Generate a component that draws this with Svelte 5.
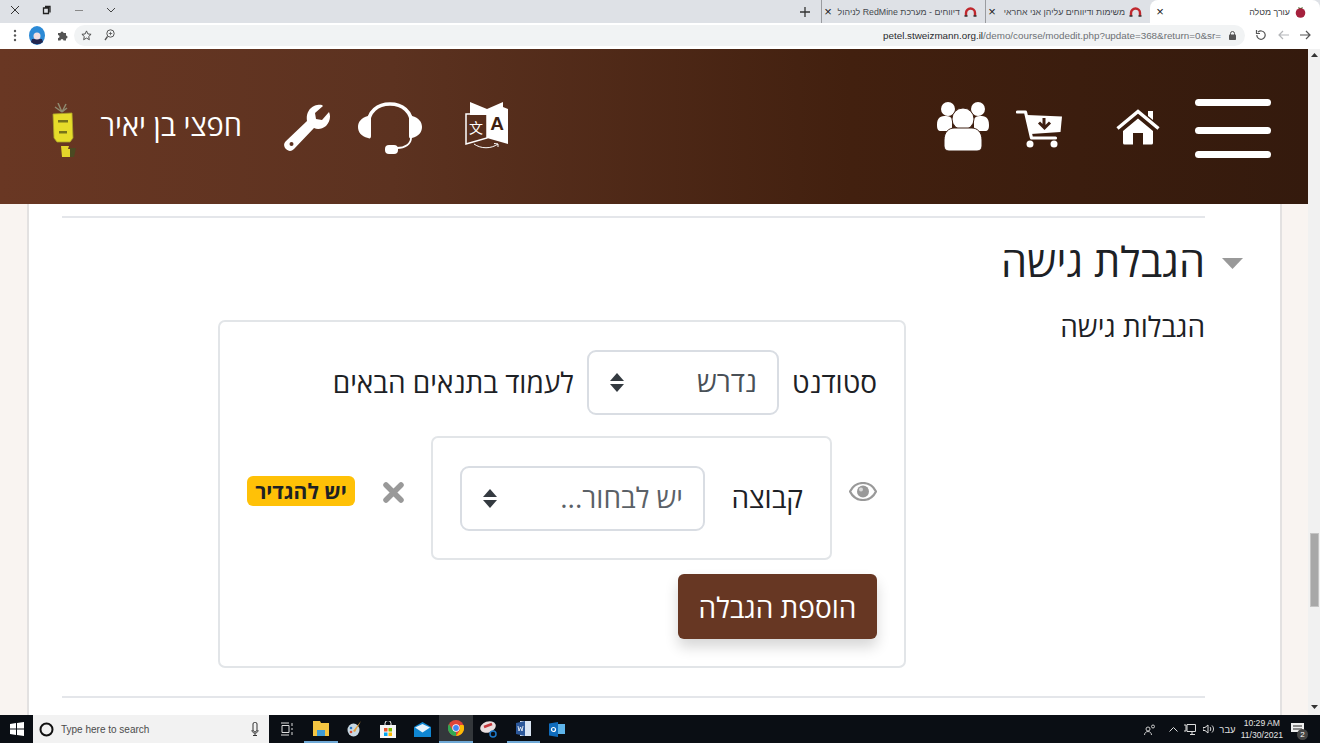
<script lang="ts">
  const tabs = [
    { title: 'משימות ודיווחים עליהן אני אחראי', width: 165 },
    { title: 'דיווחים - מערכת RedMine לניהול', width: 164 },
  ];
</script>

<div class="app">
  <div class="tabstrip">
    <div class="wincontrols">
      <svg width="10" height="10" viewBox="0 0 10 10"><path d="M1 1l8 8M9 1l-8 8" stroke="#333" fill="none" /></svg>
      <svg width="10" height="10" viewBox="0 0 10 10"><path d="M3 1.500h5v6M1.500 3h5v5.500h-5z" stroke="#222" stroke-width="1.300" fill="none" /></svg>
      <svg width="10" height="10" viewBox="0 0 10 10"><path d="M1 5.500h8" stroke="#888" /></svg>
      <svg width="10" height="10" viewBox="0 0 10 10"><path d="M1 3l4 4 4-4" stroke="#444" fill="none" /></svg>
    </div>
    <div class="tabs">
      <div class="tab active">
        <svg width="11" height="13" viewBox="0 0 11 13"><path d="M3 2l2.500 1L8 2 7 4H4z" fill="#4a7a35" /><circle cx="5.500" cy="8" r="4.800" fill="#a5213d" /></svg>
        <span class="tabtitle">עורך מטלה</span>
        <span class="tabx">×</span>
      </div>
      {#each tabs as tab}
        <div class="tab" style="width:{tab.width}px">
          <svg width="13" height="10" viewBox="0 0 13 10"><path d="M2 9V6a4.500 4.500 0 0 1 9 0v3" stroke="#c0282d" stroke-width="2.400" fill="none" /><path d="M0.500 9h3M9.500 9h3" stroke="#333" stroke-width="1.500" /></svg>
          <span class="tabtitle fade">{tab.title}</span>
          <span class="tabx">×</span>
        </div>
      {/each}
      <svg class="plus" width="10" height="10" viewBox="0 0 10 10"><path d="M5 0v10M0 5h10" stroke="#333" stroke-width="1.300" /></svg>
    </div>
  </div>

  <div class="toolbar">
    <div class="tool-left">
      <svg width="4" height="13" viewBox="0 0 4 13"><circle cx="2" cy="2" r="1.200" fill="#555" /><circle cx="2" cy="6.500" r="1.200" fill="#555" /><circle cx="2" cy="11" r="1.200" fill="#555" /></svg>
      <svg width="16" height="19" viewBox="0 0 16 19"><ellipse cx="8" cy="9.500" rx="8" ry="9.500" fill="#2c8ad6" /><path d="M2 16a9 9 0 0 0 12 0l-1-3H3z" fill="#23264f" /><circle cx="8" cy="10" r="3.500" fill="#f0dde0" /></svg>
      <svg width="11" height="11" viewBox="0 0 11 11"><path d="M1 3h2.500a1.500 1.500 0 0 1 3 0H9v2.500a1.500 1.500 0 0 1 0 3V10.500H6.500a1.500 1.500 0 0 0-3 0H1V8a1.500 1.500 0 0 0 0-3z" fill="#555" /></svg>
    </div>
    <div class="omnibox">
      <svg width="11" height="11" viewBox="0 0 12 12"><path d="M6 1l1.500 3.300 3.500.4-2.600 2.400.7 3.500L6 8.800l-3.100 1.800.7-3.500L1 4.700l3.500-.4z" fill="none" stroke="#444" /></svg>
      <svg width="11" height="12" viewBox="0 0 11 12"><circle cx="6.500" cy="4.500" r="3.700" fill="none" stroke="#555" /><path d="M3.500 7.500L1 11" stroke="#555" stroke-width="1.300" /><path d="M6.500 2.800v3.400M4.800 4.500h3.400" stroke="#555" stroke-width=".8" /></svg>
      <span class="url"><b>petel.stweizmann.org.il</b>/demo/course/modedit.php?update=368&amp;return=0&amp;sr=</span>
      <svg class="lock" width="7" height="9" viewBox="0 0 7 9"><path d="M1.500 4V2.500a2 2 0 0 1 4 0V4" stroke="#555" fill="none" /><rect y="3.500" width="7" height="5.500" rx=".8" fill="#555" /></svg>
    </div>
    <div class="tool-right">
      <svg width="12" height="12" viewBox="0 0 12 12"><path d="M3 3.200A4.200 4.200 0 1 1 1.800 6" stroke="#555" stroke-width="1.200" fill="none" /><path d="M1.500 1v3.500H5" fill="none" stroke="#555" stroke-width="1.200" /></svg>
      <svg width="11" height="10" viewBox="0 0 11 10"><path d="M11 5H1.500M5 1L1 5l4 4" stroke="#b4b6b9" stroke-width="1.200" fill="none" /></svg>
      <svg width="11" height="10" viewBox="0 0 11 10"><path d="M0 5h9.500M6 1l4 4-4 4" stroke="#555" stroke-width="1.200" fill="none" /></svg>
    </div>
  </div>

  <div class="viewport">
    <div class="page" dir="rtl">
      <header class="topbar">
        <div class="burger"><span></span><span></span><span></span></div>

        <svg class="i-home" width="44" height="36" viewBox="0 0 44 36">
          <path d="M32 2h5v9l-5-4z" fill="#fff" />
          <path d="M1.500 19.500L22 2.500l20.500 17" fill="none" stroke="#fff" stroke-width="3.400" />
          <path d="M7 22L22 9.500 37 22v12a1.500 1.500 0 0 1-1.500 1.500H27V24h-10v11.500H8.500A1.500 1.500 0 0 1 7 34z" fill="#fff" />
        </svg>

        <svg class="i-cart" width="46" height="38" viewBox="0 0 46 38">
          <path d="M1.500 2h8l6 26h24" fill="none" stroke="#fff" stroke-width="3.200" stroke-linecap="round" stroke-linejoin="round" />
          <path d="M11 5l35 1.500-1.500 15.500L15 24z" fill="#fff" />
          <path d="M28 8v8M23 12.500l5.500 5.500 5.500-5.500" fill="none" stroke="#3e1f12" stroke-width="3" />
          <circle cx="14" cy="34" r="3.500" fill="#fff" /><circle cx="38" cy="34" r="3.500" fill="#fff" />
        </svg>

        <svg class="i-users" width="52" height="49" viewBox="0 0 52 49">
          <circle cx="11" cy="7" r="7" fill="#fff" /><circle cx="41" cy="7" r="7" fill="#fff" />
          <path d="M0 23c0-8 4-9 9-9 3 0 5 1 6 3v12H4c-3 0-4-2-4-6zM52 23c0-8-4-9-9-9-3 0-5 1-6 3v12h11c3 0 4-2 4-6z" fill="#fff" />
          <circle cx="26" cy="17" r="11" fill="#fff" stroke="#3f2013" stroke-width="1" />
          <path d="M7 38c0-8 5-12 10-12h18c5 0 10 4 10 12v6c0 3-2 5-5 5H12c-3 0-5-2-5-5z" fill="#fff" stroke="#3f2013" stroke-width="1" />
        </svg>

        <svg class="i-lang" width="43" height="48" viewBox="0 0 43 48">
          <path d="M5 0l17 7v6H5z" fill="#fff" />
          <path d="M1 12h21v24L1 42z" fill="none" stroke="#fff" stroke-width="1.500" />
          <path d="M22 7L38 0v5l5 2v35L22 36z" fill="#fff" />
          <text x="11" y="31" class="lang-cjk">文</text>
          <text x="32" y="28" class="lang-a">A</text>
          <path d="M9 42c7 5 17 5 24 0M33 42l-4-.5M33 42v3" fill="none" stroke="#fff" stroke-width="1" />
        </svg>

        <svg class="i-headset" width="64" height="52" viewBox="0 0 64 52">
          <path d="M10 24C10 9 20 2 32 2s22 7 22 22" fill="none" stroke="#fff" stroke-width="3.500" />
          <path d="M10 14C3 16 0 20 0 25s3 9 10 11c2 1 3 0 3-2V16c0-2-1-3-3-2zM54 14c7 2 10 6 10 11s-3 9-10 11c-2 1-3 0-3-2V16c0-2 1-3 3-2z" fill="#fff" />
          <path d="M53 36c0 6-6 10-14 10" fill="none" stroke="#fff" stroke-width="1.800" />
          <rect x="27" y="43" width="13" height="9" rx="4" fill="#fff" />
        </svg>

        <svg class="i-wrench" width="46" height="47" viewBox="0 0 46 47">
          <path d="M30 2C36 0 38 1 39 2l-8 7 1 6 6 1 7-8c2 4 1 10-3 14-4 3-8 4-12 2L10 45c-3 3-6 2-8 0s-3-5 0-8l21-20c-1-6 1-12 7-15z" fill="#fff" />
          <circle cx="7.500" cy="40" r="2" fill="#5c3220" />
        </svg>

        <span class="username">חפצי בן יאיר</span>

        <svg class="i-avatar" width="26" height="54" viewBox="0 0 26 54">
          <path d="M6 0l4 9M14 1l-4 8M3 4l7 5M15 5l-5 4" stroke="#8f8a70" stroke-width="1.500" />
          <path d="M1 11l19-1 1 25-3 4H5l-3-4z" fill="#e6dc2a" stroke="#a8a32a" stroke-width=".8" />
          <rect x="6" y="17" width="10" height="2.500" fill="#77731a" /><rect x="7" y="28" width="8" height="2.500" fill="#77731a" />
          <path d="M9 43h8l-1 3h3v8H10z" fill="#e3d52a" /><path d="M18 45h6l-2 9h-4z" fill="#4b4a22" />
        </svg>
      </header>

      <div class="content">
        <main class="card">
          <hr />
          <div class="section-head">
            <svg class="caret" width="21" height="11" viewBox="0 0 21 11"><path d="M0 0h21L10.500 11z" fill="#999" /></svg>
            <h2>הגבלת גישה</h2>
          </div>

          <div class="field">
            <div class="label">הגבלות גישה</div>
            <div class="box">
              <div class="row-top">
                <span>סטודנט</span>
                <div class="select w192"><span>נדרש</span>
                  <svg width="14" height="19" viewBox="0 0 14 19"><path d="M7 0l7 8H0zM7 19l7-8H0z" fill="#343a40" /></svg>
                </div>
                <span>לעמוד בתנאים הבאים</span>
              </div>

              <div class="row-cond">
                <svg class="eye" width="28" height="19" viewBox="0 0 28 19">
                  <path d="M14 1C7.500 1 3 5.500 1 9.500 3 13.500 7.500 18 14 18s11-4.500 13-8.500C25 5.500 20.500 1 14 1z" fill="none" stroke="#999" stroke-width="2.200" />
                  <circle cx="14" cy="9.500" r="6" fill="#999" /><circle cx="12" cy="7.500" r="2" fill="#d8d8d8" />
                </svg>
                <div class="cond">
                  <span class="cond-label">קבוצה</span>
                  <div class="select w244"><span class="muted">יש לבחור...</span>
                    <svg width="14" height="19" viewBox="0 0 14 19"><path d="M7 0l7 8H0zM7 19l7-8H0z" fill="#343a40" /></svg>
                  </div>
                </div>
                <svg class="remove" width="21" height="21" viewBox="0 0 21 21"><path d="M3 3l15 15M18 3L3 18" stroke="#999" stroke-width="5.500" stroke-linecap="round" /></svg>
                <span class="badge">יש להגדיר</span>
              </div>

              <button type="button" class="add">הוספת הגבלה</button>
            </div>
          </div>
          <hr class="bottom" />
        </main>
      </div>
    </div>

    <div class="scrollbar">
      <svg width="7" height="4" viewBox="0 0 7 4"><path d="M3.500 0L7 4H0z" fill="#333" /></svg>
      <div class="thumb"></div>
      <svg width="7" height="4" viewBox="0 0 7 4"><path d="M3.500 4L7 0H0z" fill="#333" /></svg>
    </div>
  </div>

  <footer class="taskbar">
    <div class="start">
      <svg width="14" height="14" viewBox="0 0 14 14"><path d="M0 2l6-1v5.500H0zM7 1l7-1v6.500H7zM0 7.500h6V13l-6-1zM7 7.500h7V14l-7-1z" fill="#fff" /></svg>
    </div>
    <div class="search">
      <svg width="15" height="15" viewBox="0 0 15 15"><circle cx="7.500" cy="7.500" r="6" fill="none" stroke="#111" stroke-width="2" /></svg>
      <span>Type here to search</span>
      <svg class="mic" width="8" height="14" viewBox="0 0 8 14"><rect x="2" y="0.500" width="4" height="9" rx="1.500" fill="none" stroke="#333" /><path d="M1 8c0 2 1 3 3 3s3-1 3-3M4 11v2M2 13.500h4" stroke="#333" fill="none" /></svg>
    </div>
    <div class="apps">
      <div class="app-ico"><svg width="12" height="14" viewBox="0 0 12 14"><path d="M0 1h8M0 13h8M1 3.500h7v7H1zM11 1v3M11 6v2M11 10v3" stroke="#ddd" fill="none" /></svg></div>
      <div class="app-ico on"><svg width="16" height="15" viewBox="0 0 16 15"><path d="M0 0h7l1 2h8v13H0z" fill="#f4c542" /><path d="M4 9h8v6H4z" fill="#3e9bd6" /></svg></div>
      <div class="app-ico"><svg width="15" height="16" viewBox="0 0 15 16"><ellipse cx="6.500" cy="9" rx="6" ry="6.500" fill="#c7d7e2" /><path d="M14 0L8 11l-2-1z" fill="#e6a33c" /><circle cx="4" cy="7" r="1.300" fill="#2b77c0" /><circle cx="4" cy="11" r="1.300" fill="#d84d3a" /></svg></div>
      <div class="app-ico"><svg width="16" height="17" viewBox="0 0 16 17"><path d="M0 4h16v13H0z" fill="#f5f5f5" /><path d="M5 4V2.500a3 3 0 0 1 6 0V4" stroke="#f5f5f5" fill="none" /><path d="M4 7h3.500v3.500H4z" fill="#e9532e" /><path d="M8.500 7H12v3.500H8.500z" fill="#7db900" /><path d="M4 11.500h3.500V15H4z" fill="#00a4ef" /><path d="M8.500 11.500H12V15H8.500z" fill="#ffb900" /></svg></div>
      <div class="app-ico"><svg width="17" height="15" viewBox="0 0 17 15"><path d="M0 5L8.500 0 17 5v10H0z" fill="#0f86d2" /><path d="M1 5.500l7.500 5 7.500-5-7.500-3.500z" fill="#e8f3fb" /></svg></div>
      <div class="app-ico chrome on"><svg width="16" height="16" viewBox="0 0 16 16"><circle cx="8" cy="8" r="8" fill="#e0453a" /><path d="M8 16A8 8 0 0 1 1 4l3.500 6L8 12z" fill="#31a853" /><path d="M8 16l4-6V5h3.500A8 8 0 0 1 8 16z" fill="#fbbc05" /><circle cx="8" cy="8" r="3.700" fill="#fff" /><circle cx="8" cy="8" r="2.900" fill="#4285f4" /></svg></div>
      <div class="app-ico"><svg width="19" height="17" viewBox="0 0 19 17"><ellipse cx="8" cy="6" rx="8" ry="5.500" fill="#e9dfe0" transform="rotate(-20 8 6)" /><path d="M4 6l8-3" stroke="#c5373c" stroke-width="2.500" /><circle cx="13" cy="13" r="3" fill="none" stroke="#1e79c9" stroke-width="1.500" /></svg></div>
      <div class="app-ico on"><svg width="15" height="15" viewBox="0 0 15 15"><path d="M4 0h11v15H4z" fill="#d9e4f3" /><path d="M0 2l9-2v15l-9-2z" fill="#2b579a" /><path d="M2 5l1 5 1.500-4L6 10l1-5" stroke="#fff" stroke-width=".8" fill="none" /></svg></div>
      <div class="app-ico"><svg width="16" height="15" viewBox="0 0 16 15"><path d="M7 2h9v10H7z" fill="#5eb4ea" /><path d="M0 1.500l9-1.500v15l-9-1.500z" fill="#0f6cbd" /><circle cx="4.500" cy="7.500" r="2" fill="none" stroke="#fff" stroke-width="1.200" /></svg></div>
    </div>
    <div class="tray">
      <svg class="t-people" width="12" height="11" viewBox="0 0 12 11"><circle cx="4" cy="5" r="2" fill="none" stroke="#ccc" /><path d="M0.500 11c0-2 1.500-3.500 3.500-3.500S7.500 9 7.500 11" fill="none" stroke="#ccc" /><circle cx="9" cy="2.500" r="1.500" fill="none" stroke="#ccc" /></svg>
      <svg class="t-chev" width="9" height="5" viewBox="0 0 9 5"><path d="M.5 4.500l4-4 4 4" stroke="#ddd" fill="none" /></svg>
      <svg class="t-net" width="12" height="11" viewBox="0 0 12 11"><path d="M3 .5h8.500v7H3zM6 10.500h5M8 8v2M0 1h2v6H0" stroke="#ddd" fill="none" /></svg>
      <svg class="t-vol" width="12" height="10" viewBox="0 0 12 10"><path d="M0 3.500h2L5 1v8L2 6.500H0zM7 3c1 1 1 3 0 4M9 1.500c2 2 2 5 0 7" stroke="#ddd" fill="none" /></svg>
      <span class="lang" dir="rtl">עבר</span>
      <div class="clock"><span>10:29 AM</span><span>11/30/2021</span></div>
      <div class="notify">
        <svg width="13" height="12" viewBox="0 0 13 12"><path d="M0 0h13v9H0z" fill="#eee" /><path d="M2 3h9M2 6h9" stroke="#222" /></svg>
        <span class="count">2</span>
      </div>
    </div>
  </footer>
</div>

<style>
  :global(body) {
    margin: 0;
    overflow: hidden;
  }
  .app {
    width: 1320px;
    height: 743px;
    display: flex;
    flex-direction: column;
    overflow: hidden;
    font-family: "Open Sans", "Liberation Sans", sans-serif;
    color: #1d2125;
  }

  /* browser chrome */
  .tabstrip {
    height: 23px;
    flex: none;
    display: flex;
    justify-content: space-between;
    background: #dee1e6;
  }
  .wincontrols {
    display: flex;
    align-items: center;
    gap: 22px;
    padding-left: 10px;
    height: 19px;
  }
  .tabs {
    display: flex;
    flex-direction: row-reverse;
    align-items: center;
  }
  .tab {
    height: 23px;
    box-sizing: border-box;
    display: flex;
    flex-direction: row-reverse;
    align-items: center;
    gap: 4px;
    padding: 0 8px 0 0;
    font: 8.800px "Liberation Sans", sans-serif;
    color: #45494e;
    border-left: 1px solid #9a9ca0;
    background-clip: padding-box;
  }
  .tab.active {
    width: 170px;
    padding-right: 14px;
    background: #fff;
    border-left: 0;
    border-radius: 8px 8px 0 0;
    color: #3c4043;
    gap: 5px;
  }
  .tab.active .tabx {
    margin-right: auto;
    padding-left: 4px;
  }
  .tabtitle {
    direction: rtl;
    white-space: nowrap;
  }
  .fade {
    flex: 1;
    min-width: 0;
  }
  .tabx {
    font-size: 13px;
    line-height: 1;
    color: #222;
    width: 12px;
    text-align: center;
    flex: none;
  }
  .plus {
    margin-right: 11px;
  }

  .toolbar {
    height: 26px;
    flex: none;
    display: flex;
    align-items: center;
    background: #fff;
    border-bottom: 2px solid #fff;
    box-sizing: border-box;
  }
  .tool-left {
    display: flex;
    align-items: center;
    width: 74px;
    padding-left: 13px;
    gap: 12px;
    box-sizing: border-box;
    flex: none;
  }
  .omnibox {
    width: 1171px;
    height: 21px;
    flex: none;
    box-sizing: border-box;
    display: flex;
    align-items: center;
    padding: 0 9px 0 7px;
    gap: 12px;
    background: #f1f3f4;
    border-radius: 11px;
  }
  .url {
    margin-left: auto;
    font: 9.830px "Liberation Sans", sans-serif;
    color: #6d7175;
    white-space: nowrap;
  }
  .url b {
    font-weight: 400;
    color: #2a2c2e;
  }
  .lock {
    margin-left: -4px;
  }
  .tool-right {
    display: flex;
    align-items: center;
    gap: 11px;
    padding-left: 10px;
  }

  .viewport {
    flex: 1;
    min-height: 0;
    display: flex;
  }
  .page {
    width: 1308px;
    flex: none;
    display: flex;
    flex-direction: column;
  }

  /* site header */
  .topbar {
    height: 155px;
    flex: none;
    box-sizing: border-box;
    display: flex;
    align-items: center;
    padding: 0 37px 0 0;
    color: #fff;
    background: linear-gradient(to left, #341a0d 0%, #42200f 35%, #5c3220 70%, #693723 100%);
  }
  .burger {
    width: 76px;
    flex: none;
    display: flex;
    flex-direction: column;
    margin-top: 3px;
  }
  .burger span {
    height: 7px;
    background: #fff;
    border-radius: 4px;
  }
  .burger span:nth-child(2) {
    margin: 21px 0 17px;
  }
  .i-home {
    margin: 0 35px 0 0;
    flex: none;
  }
  .i-cart {
    margin: 4px 54px 0 0;
    flex: none;
  }
  .i-users {
    margin: 0 27px 0 0;
    flex: none;
  }
  .i-lang {
    margin: 0 429px 2px 0;
    flex: none;
  }
  .lang-cjk {
    font: 14px "Noto Sans CJK SC", sans-serif;
    fill: #fff;
    text-anchor: middle;
  }
  .lang-a {
    font: 700 19px "Liberation Sans", sans-serif;
    fill: #3e1f12;
    text-anchor: middle;
  }
  .i-headset {
    margin: 2px 43px 0 0;
    flex: none;
  }
  .i-wrench {
    margin: 2px 28px 0 0;
    flex: none;
  }
  .username {
    margin: 0 42px 4px 0;
    font-size: 29px;
    line-height: 34px;
    white-space: nowrap;
  }
  .i-avatar {
    margin: 7px 23px 0 0;
    flex: none;
  }

  /* page body */
  .content {
    flex: 1;
    min-height: 0;
    padding: 0 26px 0 27px;
    background: #f9f4f1;
    overflow: hidden;
  }
  .card {
    height: 100%;
    box-sizing: border-box;
    padding: 12px 75px 0 33px;
    background: #fff;
    border-left: 2px solid #e3e1e1;
    border-right: 2px solid #e3e1e1;
  }
  hr {
    margin: 0;
    border: 0;
    border-top: 2px solid #e4e6ea;
  }
  hr.bottom {
    margin-top: 28px;
  }
  .section-head {
    display: flex;
    align-items: center;
    gap: 17px;
    margin: 16px -38px 0 0;
    height: 55px;
  }
  .caret {
    flex: none;
    margin-top: 3px;
  }
  h2 {
    margin: 0;
    font-size: 41.500px;
    font-weight: 400;
    line-height: 55px;
  }
  .field {
    display: flex;
    margin-top: 31px;
  }
  .label {
    width: 299px;
    flex: none;
    font-size: 28px;
    line-height: 36px;
    margin-top: -12px;
  }
  .box {
    width: 688px;
    box-sizing: border-box;
    padding: 28px 27px 27px;
    border: 2px solid #e2e5e8;
    border-radius: 7px;
    font-size: 28px;
  }
  .row-top {
    display: flex;
    align-items: center;
    gap: 13px;
    line-height: 36px;
  }
  .row-top > span {
    margin-top: -2px;
  }
  .select {
    height: 65px;
    box-sizing: border-box;
    display: flex;
    align-items: center;
    justify-content: space-between;
    padding: 0 20px 0 21px;
    border: 2px solid #d9dde3;
    border-radius: 9px;
    color: #495057;
    background: #fff;
  }
  .select span {
    margin-top: -3px;
  }
  .w192 {
    width: 192px;
  }
  .w244 {
    width: 245px;
  }
  .muted {
    color: #5b6167;
  }
  .row-cond {
    display: flex;
    align-items: center;
    margin-top: 21px;
  }
  .eye {
    flex: none;
    margin: 0 0 14px 17px;
  }
  .cond {
    width: 401px;
    height: 124px;
    box-sizing: border-box;
    display: flex;
    align-items: center;
    justify-content: space-between;
    padding: 0 27px;
    border: 2px solid #e2e5e8;
    border-radius: 7px;
  }
  .cond-label {
    margin-top: -2px;
  }
  .remove {
    flex: none;
    margin: 0 27px 12px 28px;
  }
  .badge {
    width: 108px;
    height: 30px;
    display: flex;
    align-items: center;
    justify-content: center;
    flex: none;
    margin-bottom: 14px;
    border-radius: 6px;
    background: #ffc107;
    color: #1d2125;
    font-size: 21px;
    font-weight: 700;
  }
  .add {
    display: block;
    width: 199px;
    height: 65px;
    margin-top: 14px;
    padding: 0;
    border: 0;
    border-radius: 6px;
    background: #673723;
    color: #fff;
    font: 400 28px "Open Sans", "Liberation Sans", sans-serif;
    box-shadow: 0 8px 14px rgba(0, 0, 0, 0.16);
  }

  .scrollbar {
    width: 12px;
    flex: none;
    display: flex;
    flex-direction: column;
    align-items: center;
    background: #f1f1f1;
    padding-top: 4px;
    box-sizing: border-box;
  }
  .thumb {
    width: 9px;
    height: 74px;
    margin: 476px 0 98px;
    background: #a8a8a8;
    border: 1px solid #c4c4c4;
    box-sizing: border-box;
  }

  /* windows taskbar */
  .taskbar {
    height: 28px;
    flex: none;
    display: flex;
    align-items: center;
    background: #0a0e14;
    font-family: "Liberation Sans", sans-serif;
  }
  .start {
    width: 33px;
    display: flex;
    justify-content: center;
    flex: none;
  }
  .search {
    width: 236px;
    height: 28px;
    flex: none;
    box-sizing: border-box;
    display: flex;
    align-items: center;
    gap: 7px;
    padding: 0 10px 0 6px;
    background: #f2f2f2;
    color: #4c4c4c;
    font-size: 10px;
  }
  .mic {
    margin-left: auto;
  }
  .apps {
    display: flex;
    padding-left: 1px;
  }
  .app-ico {
    width: 33.800px;
    height: 28px;
    display: flex;
    align-items: center;
    justify-content: center;
    box-sizing: border-box;
  }
  .app-ico.on {
    border-bottom: 2px solid #6fa9d6;
  }
  .app-ico.chrome {
    background: #33373b;
  }
  .tray {
    margin-left: auto;
    display: flex;
    align-items: center;
    color: #ddd;
    font-size: 9.500px;
  }
  .t-people {
    margin-right: 13px;
  }
  .t-chev {
    margin-right: 6px;
  }
  .t-net {
    margin-right: 7px;
  }
  .t-vol {
    margin-right: 4px;
  }
  .lang {
    margin-right: 5px;
  }
  .clock {
    display: flex;
    flex-direction: column;
    align-items: center;
    line-height: 12px;
    font-size: 8.600px;
    color: #e4e4e4;
    margin-right: 8px;
  }
  .notify {
    position: relative;
    width: 15px;
    margin-right: 14px;
    display: flex;
  }
  .count {
    position: absolute;
    right: -2px;
    bottom: -5px;
    width: 11px;
    height: 11px;
    border-radius: 50%;
    background: #444;
    color: #fff;
    font-size: 8px;
    line-height: 11px;
    text-align: center;
  }
</style>
